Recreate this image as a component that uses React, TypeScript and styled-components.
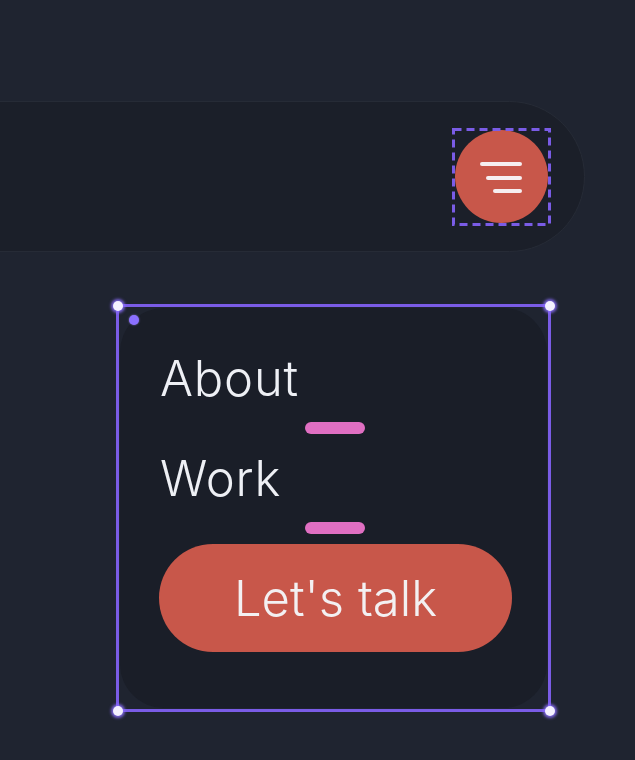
import React from "react";
import styled, { createGlobalStyle } from "styled-components";

const Global = createGlobalStyle`
  html, body {
    margin: 0;
    padding: 0;
    background: #1f2430;
    overflow: hidden;
  }
  body {
    font-family: Inter, "Noto Sans", sans-serif;
    color: #eef0f5;
  }
`;

const Page = styled.div`
  width: 635px;
  height: 760px;
  background: #1f2430;
  display: flex;
  flex-direction: column;
  padding-top: 101px;
  box-sizing: border-box;
  overflow: hidden;
`;

const NavBar = styled.header`
  margin-left: -80px;
  width: 665px;
  height: 151px;
  box-sizing: border-box;
  border-radius: 76px;
  background: #1b1f29;
  border: 1px solid #262b36;
  display: flex;
  align-items: center;
  justify-content: flex-end;
  padding-right: 36px;
  flex-shrink: 0;
`;

const MenuButtonWrap = styled.div`
  position: relative;
  width: 93px;
  height: 93px;
`;

const MenuButton = styled.button`
  width: 93px;
  height: 93px;
  border-radius: 50%;
  border: none;
  padding: 0;
  background: #c8574a;
  display: flex;
  align-items: center;
  justify-content: center;
  cursor: pointer;
`;

const DashedSelection = styled.svg`
  position: absolute;
  left: -3px;
  top: -2px;
  width: 99px;
  height: 98px;
  overflow: visible;
  pointer-events: none;
`;

const Frame = styled.div`
  position: relative;
  margin-top: 52px;
  margin-left: 116px;
  width: 435px;
  height: 408px;
  box-sizing: border-box;
  border: 3px solid #7a5ce6;
  padding: 1px;
  flex-shrink: 0;
`;

const Handle = styled.span<{ $x: "left" | "right"; $y: "top" | "bottom" }>`
  position: absolute;
  width: 10px;
  height: 10px;
  border-radius: 50%;
  background: #f4f1ff;
  box-shadow: 0 0 3px 2px rgba(140, 110, 255, 0.85);
  ${(p) => (p.$x === "left" ? "left: -6.5px;" : "right: -6.5px;")}
  ${(p) => (p.$y === "top" ? "top: -6.5px;" : "bottom: -6.5px;")}
  z-index: 2;
`;

const Card = styled.nav`
  position: relative;
  height: 100%;
  box-sizing: border-box;
  border-radius: 44px;
  background: #1a1e28;
  padding: 46px 0 0 40px;
  display: flex;
  flex-direction: column;
  align-items: flex-start;
`;

const Dot = styled.span`
  position: absolute;
  left: 9px;
  top: 7px;
  width: 10px;
  height: 10px;
  border-radius: 50%;
  background: #8b70ff;
  box-shadow: 0 0 2px rgba(170, 150, 255, 0.7);
`;

const MenuLink = styled.a<{ $gap: number }>`
  display: block;
  margin-top: ${(p) => p.$gap}px;
  font-family: Inter, "Noto Sans", sans-serif;
  font-size: 49px;
  font-weight: 300;
  line-height: 49px;
  letter-spacing: 0.8px;
  color: #eef0f5;
  text-decoration: none;
`;

const Underline = styled.span<{ $gap: number }>`
  display: block;
  margin-top: ${(p) => p.$gap}px;
  margin-left: 145px;
  width: 60px;
  height: 12px;
  border-radius: 6px;
  background: #e06fc2;
`;

const TalkButton = styled.button`
  margin-top: 10px;
  margin-left: -1px;
  width: 353px;
  height: 108px;
  border-radius: 54px;
  border: none;
  background: #c8574a;
  color: #f3f0f2;
  font-family: Inter, "Noto Sans", sans-serif;
  font-size: 49px;
  font-weight: 300;
  letter-spacing: 0;
  display: flex;
  align-items: center;
  justify-content: center;
  padding: 0;
  cursor: pointer;
`;

const HamburgerIcon = () => (
  <svg width="93" height="93" viewBox="0 0 93 93" fill="none">
    <g stroke="#f6eef0" strokeWidth="4" strokeLinecap="round">
      <line x1="27" y1="34" x2="65" y2="34" />
      <line x1="33" y1="48" x2="65" y2="48" />
      <line x1="40" y1="61" x2="65" y2="61" />
    </g>
  </svg>
);

export default function App() {
  return (
    <>
      <Global />
      <Page>
        <NavBar>
          <MenuButtonWrap>
            <MenuButton aria-label="Menu">
              <HamburgerIcon />
            </MenuButton>
            <DashedSelection viewBox="0 0 99 98">
              <rect
                x="1.5"
                y="1.5"
                width="96"
                height="95"
                fill="none"
                stroke="#7a5ce6"
                strokeWidth="3"
                strokeDasharray="8 5"
              />
            </DashedSelection>
          </MenuButtonWrap>
        </NavBar>
        <Frame>
          <Handle $x="left" $y="top" />
          <Handle $x="right" $y="top" />
          <Handle $x="left" $y="bottom" />
          <Handle $x="right" $y="bottom" />
          <Card>
            <Dot />
            <MenuLink $gap={0} href="#">About</MenuLink>
            <Underline $gap={19} />
            <MenuLink $gap={20} href="#">Work</MenuLink>
            <Underline $gap={19} />
            <TalkButton>Let's talk</TalkButton>
          </Card>
        </Frame>
      </Page>
    </>
  );
}
